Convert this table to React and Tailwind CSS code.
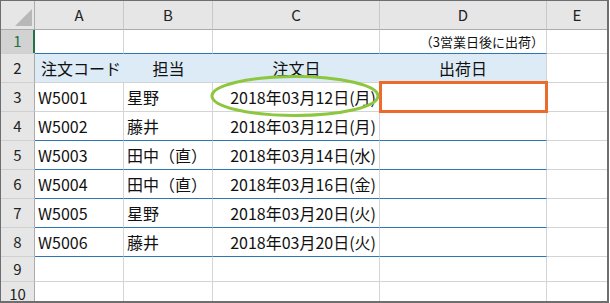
const cols = 'grid grid-cols-[34px_89px_89px_167px_167px_1fr]';

const rows = [
  { n: 3, a: 'W5001', b: '星野', c: '2018年03月12日(月)', line: 'gray' },
  { n: 4, a: 'W5002', b: '藤井', c: '2018年03月12日(月)', line: 'blue' },
  { n: 5, a: 'W5003', b: '田中（直）', c: '2018年03月14日(水)', line: 'blue' },
  { n: 6, a: 'W5004', b: '田中（直）', c: '2018年03月16日(金)', line: 'blue' },
  { n: 7, a: 'W5005', b: '星野', c: '2018年03月20日(火)', line: 'blue' },
  { n: 8, a: 'W5006', b: '藤井', c: '2018年03月20日(火)', line: 'blue' },
];

const RowHead = ({ n, selected }) => (
  <div
    className={
      'relative flex items-center justify-center border-r border-b border-r-[#ababab] border-b-[#d0d0d0] text-[15px] ' +
      (selected ? 'bg-[#d2d2d2] text-[#217346]' : 'bg-[#e6e6e6] text-[#222]')
    }
  >
    {n}
    {selected && <div className="absolute right-[-1px] top-0 h-full w-[2px] bg-[#217346]" />}
  </div>
);

const DataRow = ({ row }) => {
  const bb = row.line === 'blue' ? 'border-b-[#2e75b6]' : 'border-b-[#d4d4d4]';
  return (
    <div className={cols + ' h-[29px] text-[16px]'}>
      <RowHead n={row.n} />
      <div className={'flex items-center pl-[3px] border-r border-b border-r-[#d4d4d4] ' + bb}>{row.a}</div>
      <div className={'flex items-center pl-[3px] border-r border-b border-r-[#d4d4d4] ' + bb}>{row.b}</div>
      <div className={'flex items-center justify-end pr-[3px] border-r border-b border-r-[#d4d4d4] ' + bb}>{row.c}</div>
      <div className={'border-r border-b border-r-[#d4d4d4] ' + bb}></div>
      <div className="border-b border-[#d4d4d4]"></div>
    </div>
  );
};

export default function App() {
  return (
    <div
      className="relative w-[609px] h-[303px] overflow-hidden bg-white border-l border-t border-r-2 border-b-2 border-[#6e6e6e] text-[15px] text-[#111]"
      style={{ fontFamily: '"Noto Sans CJK JP", "Noto Sans", sans-serif' }}
    >
      {/* column headers */}
      <div className={cols + ' h-[29px] bg-[#e6e6e6] text-[#222]'}>
        <div className="relative border-r border-b border-[#ababab]">
          <svg className="absolute left-[14px] top-[8px]" width="17" height="17" viewBox="0 0 17 17">
            <polygon points="17,0 17,17 0,17" fill="#b8b8b8" />
          </svg>
        </div>
        {['A', 'B', 'C', 'D', 'E'].map((c) => (
          <div key={c} className="flex items-center justify-center border-r border-b border-r-[#c8c8c8] border-b-[#ababab] last:border-r-0">
            {c}
          </div>
        ))}
      </div>

      {/* row 1 */}
      <div className={cols + ' h-[24px]'}>
        <RowHead n={1} selected />
        <div className="border-r border-b border-r-[#d4d4d4] border-b-[#2e75b6]"></div>
        <div className="border-r border-b border-r-[#d4d4d4] border-b-[#2e75b6]"></div>
        <div className="border-r border-b border-r-[#d4d4d4] border-b-[#2e75b6]"></div>
        <div className="flex items-center justify-end pr-[2px] text-[13px] border-r border-b border-r-[#d4d4d4] border-b-[#2e75b6]">
          （3営業日後に出荷）
        </div>
        <div className="border-b border-[#d4d4d4]"></div>
      </div>

      {/* row 2: table header */}
      <div className={cols + ' h-[29px] text-[16px]'}>
        <RowHead n={2} />
        <div className="flex items-center pl-[6px] bg-[#ddebf7] border-b border-[#d4d4d4]">注文コード</div>
        <div className="flex items-center justify-center bg-[#ddebf7] border-b border-[#d4d4d4]">担当</div>
        <div className="flex items-center justify-center bg-[#ddebf7] border-b border-[#d4d4d4]">注文日</div>
        <div className="flex items-center justify-center bg-[#ddebf7] border-r border-b border-[#d4d4d4]">出荷日</div>
        <div className="border-b border-[#d4d4d4]"></div>
      </div>

      {rows.map((r) => (
        <DataRow key={r.n} row={r} />
      ))}

      {[9, 10].map((n) => (
        <div key={n} className={cols + ' h-[25px]'}>
          <RowHead n={n} />
          <div className="border-r border-b border-[#d4d4d4]"></div>
          <div className="border-r border-b border-[#d4d4d4]"></div>
          <div className="border-r border-b border-[#d4d4d4]"></div>
          <div className="border-r border-b border-[#d4d4d4]"></div>
          <div className="border-b border-[#d4d4d4]"></div>
        </div>
      ))}

      {/* annotations */}
      <div className="absolute left-[378px] top-[80px] w-[169px] h-[32px] border-[3px] border-[#ee6a2a]"></div>
      <svg className="absolute left-[205px] top-[70px]" width="180" height="50" viewBox="0 0 180 50">
        <ellipse cx="89" cy="25" rx="83" ry="19.5" fill="none" stroke="#8dc63f" strokeWidth="3" />
      </svg>
    </div>
  );
}
